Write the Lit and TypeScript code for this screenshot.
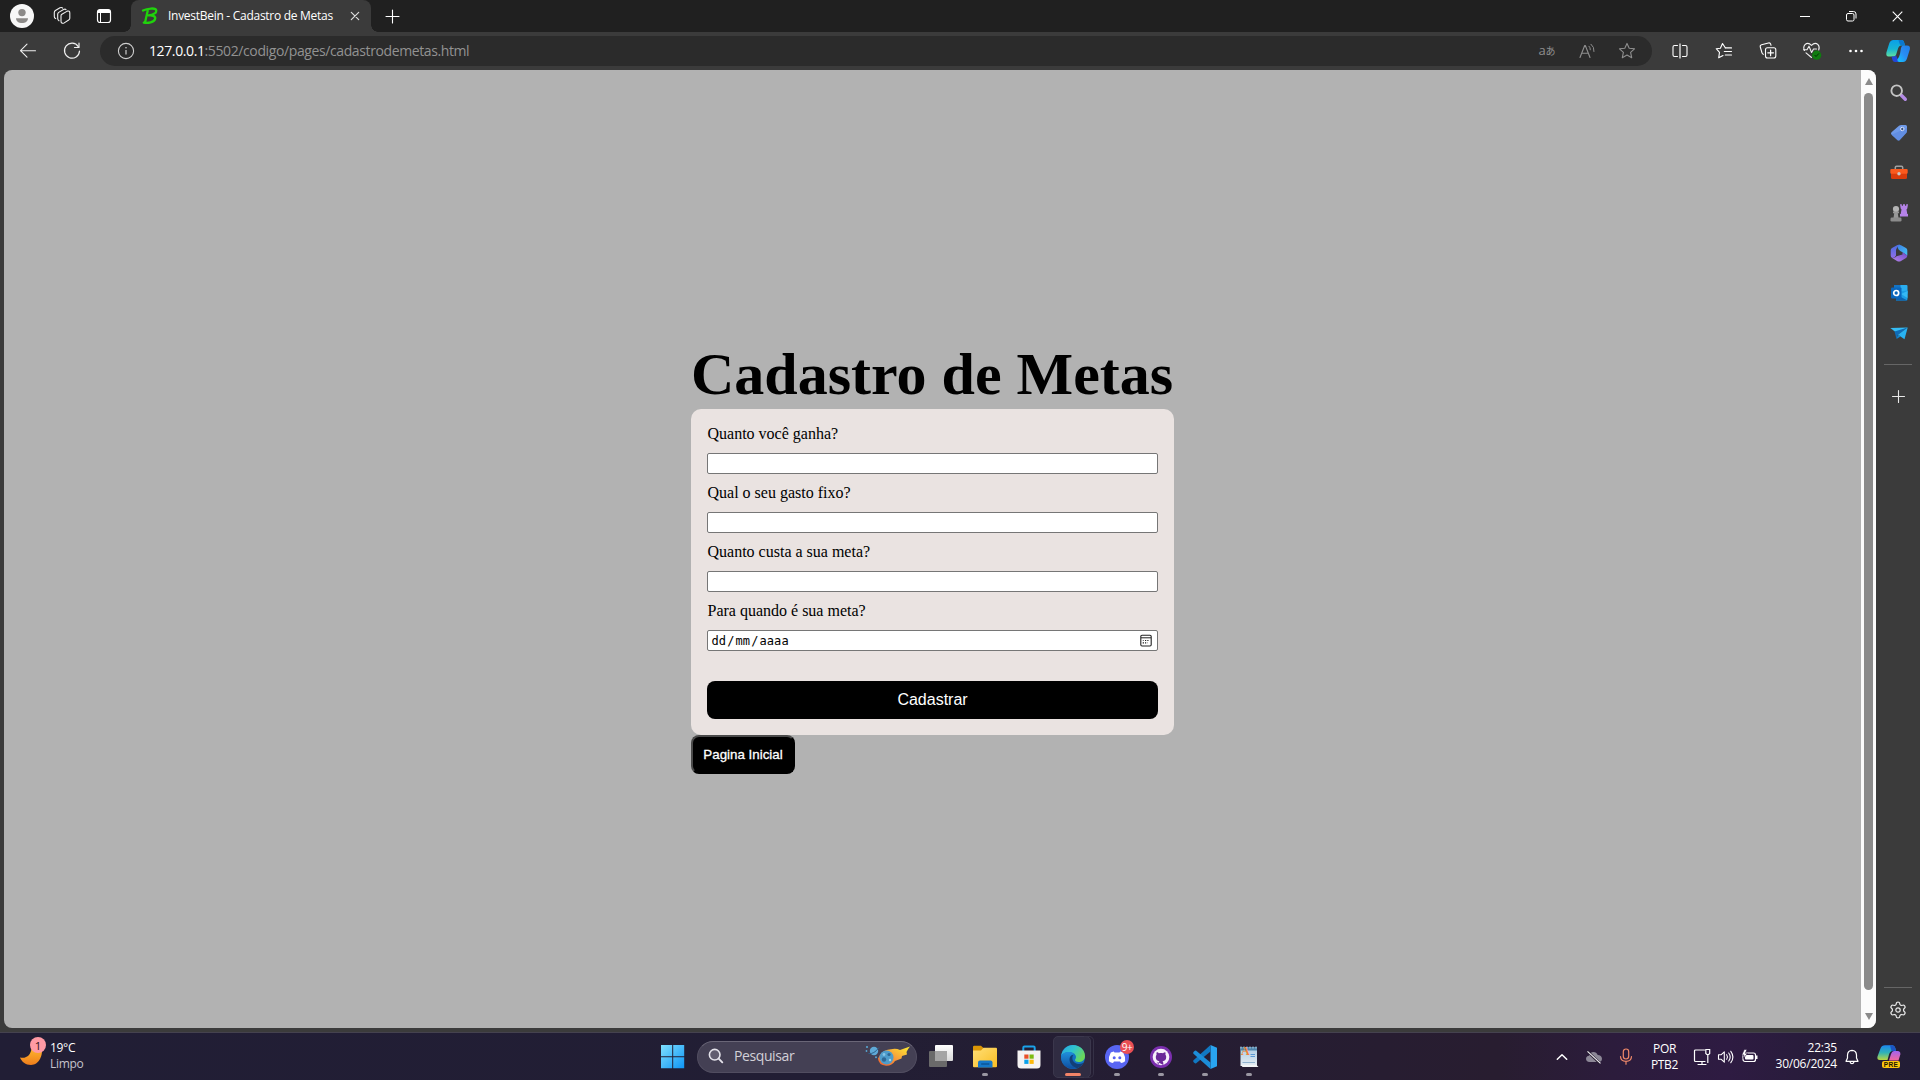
import { LitElement, html, css, svg, type TemplateResult } from "lit";
import { customElement } from "lit/decorators.js";

/** Wraps svg content in a square or rectangular icon of the given size. */
const icon = (w: number, h: number, body: TemplateResult, cls = "") =>
  html`<svg class="ico ${cls}" width=${w} height=${h} viewBox="0 0 ${w} ${h}" fill="none">${body}</svg>`;

const line = (d: string, stroke = "#fff", width = 1) =>
  svg`<path d=${d} stroke=${stroke} stroke-width=${width} stroke-linecap="round" stroke-linejoin="round"/>`;

/* ---- window chrome ---- */
const avatar = icon(24, 24, svg`<circle cx="12" cy="12" r="12" fill="#f7f7f7"/><circle cx="12" cy="8.6" r="3.7" fill="#8c8a88"/>
  <path d="M6 14.200h12c0 3.200-2.800 4.800-6 4.800s-6-1.600-6-4.800z" fill="#8c8a88"/>`);
const workspaces = icon(18, 18, svg`${line("M8.500 7.500 14.300 4.100Q16.800 3.500 16.800 6V11.200Q16.800 12.400 15.700 13L11.200 15.900Q8 17 8 14.200V9Q8 7.900 8.500 7.500Z", "#f0f0f0", 1.1)}
  ${line("M6 13.800Q4.700 13 4.700 11.600V7.300Q4.700 6.100 5.700 5.400L10.600 2.500Q12.200 1.700 13 2.700", "#f0f0f0", 1.1)}
  ${line("M2.700 11.600Q1.300 11 1.300 9.400V5.500Q1.300 4.200 2.400 3.500L7 .8Q8.800 0 9.700 1.100", "#f0f0f0", 1.1)}`);
const tabActions = icon(16, 16, svg`<rect x="1.500" y="1.500" width="13" height="13" rx="2.500" stroke="#fff" stroke-width="1.200"/>
  <path d="M1.500 5V4a2.500 2.500 0 0 1 2.500-2.500h8A2.500 2.500 0 0 1 14.500 4v1z" fill="#fff"/>${line("M4.500 5V14")}`);
const favicon = icon(16, 18, svg`<path d="M1 3.500 C5 1.500 14 .2 14.300 3.600 C14.500 6.500 9 8 6.500 8.400 C10 8 13.800 8.800 13.200 11.800 C12.500 15.500 5.500 16.500 1.800 15.600 M5.800 3.200 C5 7 4 11 3.200 15" stroke="#20d30c" stroke-width="2.300" stroke-linecap="round" stroke-linejoin="round"/>`);
const tabClose = icon(10, 10, line("M1.300 1.300 8.700 8.700 M8.700 1.300 1.300 8.700", "#ddd", 1.2));
const newTab = icon(15, 15, line("M7.500 1V14 M1 7.500H14", "#fff", 1.1));
const minimize = icon(10, 11, svg`<path d="M0 5.500H10" stroke="#fff"/>`);
const restore = icon(11, 11, svg`<rect x=".5" y="2.500" width="7.500" height="7.500" rx="1.500" stroke="#fff"/><path d="M3 .5H7.500Q10 .5 10 3V7.500" stroke="#fff"/>`);
const closeWin = icon(11, 11, svg`<path d="M.7 .7 10.300 10.300 M10.300 .7 .7 10.300" stroke="#fff" stroke-width="1.100"/>`);

/* ---- toolbar ---- */
const back = icon(18, 16, line("M1.500 7.700H16.500 M8 1.200 1.500 7.700 8 14.200", "#f0f0f0", 1.1));
const reload = icon(18, 18, svg`${line("M15.300 4.600A7.500 7.500 0 1 0 16.500 9", "#f0f0f0", 1.2)}${line("M16 1.200V5.500H11.500", "#f0f0f0", 1.2)}`);
const info = icon(18, 18, svg`<circle cx="9" cy="9" r="7.600" stroke="#cfcfcf" stroke-width="1.100"/><path d="M9 8V12.600" stroke="#cfcfcf" stroke-width="1.200"/><circle cx="9" cy="5.700" r=".8" fill="#cfcfcf"/>`);
const readAloud = icon(16, 16, svg`${line("M1 14.500 5.700 2.500H6.300L11 14.500 M2.700 10.300H9.300", "#8f8f8f", 1.1)}${line("M10 3.200Q11.500 4.500 11.300 6.800 M12 1.200Q15.500 4 15 8.500", "#8f8f8f", 1)}`);
const starPath = "M9 1.400 11.200 6.200 16.500 6.800 12.600 10.400 13.700 15.700 9 13 4.300 15.700 5.400 10.400 1.500 6.800 6.800 6.200Z";
const star = icon(18, 18, line(starPath, "#8f8f8f", 1.1));
const split = icon(16, 16, svg`${line("M5.500 2.500H2.500Q1 2.500 1 4V12Q1 13.500 2.500 13.500H5.500 M10.500 2.500H13.500Q15 2.500 15 4V12Q15 13.500 13.500 13.500H10.500", "#fff", 1.1)}<path d="M8 .5V15.500" stroke="#fff" stroke-width="1.200"/>`);
const favorites = icon(18, 18, svg`${line("M10.300 5.700 7.500 1.500 5.400 6.200 1.200 6.700 4.500 10.300 3.700 15.800 8 13.500", "#fff", 1.1)}${line("M10.300 5.900H16.500 M9.300 9.500H16.500 M10.300 13H16.500", "#fff", 1.1)}`);
const collections = icon(18, 18, svg`<rect x="6.500" y="5.700" width="10.300" height="10.300" rx="2" stroke="#fff" stroke-width="1.100"/>
  ${line("M11.600 8V13.700 M8.800 10.800H14.500", "#fff", 1.2)}${line("M4.500 12.300Q3.400 12.200 3 10.800L1.300 5Q.8 3.300 2.600 2.800L9.400 1Q11.200 .5 11.700 2.200L12 3.300", "#fff", 1.1)}`);
const health = icon(20, 20, svg`${line("M2.500 9.500Q.8 6.200 3 3.700 6 .9 9.500 4.300 13 .9 16 3.700 18 6 16.700 9 M4 11.800 9.500 16.500", "#f0f0f0", 1.1)}
  ${line("M1.500 8.700H5L7 5.200 9.600 11.500 11.500 8H14.500", "#f0f0f0", 1.1)}<circle cx="14.700" cy="14.200" r="4.600" fill="#107c10"/>${line("M12.900 14.300 14 15.500 16.700 12.700", "#062f06", 1)}`);
const dots = icon(16, 4, svg`<circle cx="2.500" cy="2" r="1.300" fill="#fff"/><circle cx="8" cy="2" r="1.300" fill="#fff"/><circle cx="13.500" cy="2" r="1.300" fill="#fff"/>`);

const copilot = icon(24, 24, svg`<defs>
    <linearGradient id="cpA" x1="0" y1="0" x2="0" y2="1"><stop offset="0" stop-color="#0a9fe8"/><stop offset=".55" stop-color="#17b4d2"/><stop offset="1" stop-color="#5fe0a0"/></linearGradient>
    <linearGradient id="cpB" x1="1" y1="0" x2="0" y2="1"><stop offset="0" stop-color="#1f7fe8"/><stop offset=".5" stop-color="#2a8cf4"/><stop offset="1" stop-color="#10c8ff"/></linearGradient></defs>
  <path d="M7.500 1H15.500Q17.700 1 18.300 4L19 6.500H15Q13 6.500 12.200 9L10 16Q9.500 17.500 7.500 17.500H2.500Q-.3 17.500 .4 13.500L3.200 4.500Q4.300 1 7.500 1Z" fill="url(#cpA)"/>
  <path d="M12.500 1H15.500Q17.700 1 18.300 4L19 6.500H15.500Q13.500 6 12.500 1Z" fill="#0a78d0"/>
  <path d="M5.500 17.500H7.500Q9.500 17.500 10 16L12 21Q12.500 23 14 23H9Q6.700 23 6.200 20Z" fill="#2346d8"/>
  <path d="M17 6.500H21Q24.700 6.700 23.800 10.500L21 19.500Q19.800 23 17 23H13Q11.300 22.700 11.300 20.500 13 19 14 15L15 9Q15.500 6.700 17 6.500Z" fill="url(#cpB)"/>`);

/* ---- sidebar ---- */
const sbSearch = icon(18, 18, svg`<path d="M11.300 11.300 15.300 15.300" stroke="#b48be6" stroke-width="3.400" stroke-linecap="round"/><circle cx="6.700" cy="6.700" r="5.300" stroke="#c4c4c4" stroke-width="1.900"/>`);
const sbTag = icon(18, 18, svg`<path d="M9 1.800Q10 1 11.300 1H15.500Q17 1 17 2.500V7Q17 8.300 16 9.300L9.800 16Q8.600 17.200 7.300 16L1.600 10.700Q.3 9.500 1.500 8.300Z" fill="#6f9ae8"/>
  <path d="M1.600 10.700 17 4V7Q17 8.300 16 9.300L9.800 16Q8.600 17.200 7.300 16Z" fill="#5582dc" opacity=".5"/><circle cx="12.300" cy="5" r="1.700" fill="#35507f" stroke="#dce6ff"/>`);
const sbTools = icon(18, 16, svg`<path d="M5.300 4V2.500Q5.300 1.300 6.500 1.300H11.500Q12.700 1.300 12.700 2.500V4" stroke="#a0a0a0" stroke-width="1.500"/>
  <path d="M1 8H17V12.500Q17 14 15.500 14H2.500Q1 14 1 12.500Z" fill="#d93c0c"/><rect x=".3" y="4" width="17.400" height="4.800" rx="1" fill="#fa5a1e"/><circle cx="9" cy="8.700" r="1.700" fill="#c8c8c8"/>`);
const sbGames = icon(18, 18, svg`<path d="M10 .3H11.800V1.800H13V.3H15V1.800H16.200V.3H18L17.300 4.500 16.500 5.500 17.300 10H18V12.500H10V10H10.700L11.500 5.500 10.700 4.500Z" fill="#b583e8"/>
  <circle cx="6" cy="5" r="3.100" fill="#b4b4b4"/><path d="M3 7.500H9V9.300H7.800L8.500 14H3.500L4.200 9.300H3Z" fill="#989898"/><rect x=".5" y="13.600" width="11" height="4" rx="1.300" fill="#8c8c8c"/>`);
const sb365 = icon(18, 18, svg`<defs><linearGradient id="mA" x1="0" y1="0" x2="0" y2="1"><stop stop-color="#4a6ce0"/><stop offset="1" stop-color="#8f6ee8"/></linearGradient>
    <linearGradient id="mB" x1="0" y1="1" x2="1" y2="0"><stop stop-color="#b884ea"/><stop offset="1" stop-color="#6a4cc8"/></linearGradient>
    <linearGradient id="mC" x1="0" y1="0" x2="1" y2="1"><stop stop-color="#3c7ce4"/><stop offset="1" stop-color="#45c6f6"/></linearGradient></defs>
  <path d="M7 1.200Q9 .2 11 1.200L16 4Q17.300 4.800 17.300 6.300V11.500L12.500 8.200Q7.500 6 7 1.200Z" fill="url(#mC)"/>
  <path d="M7 1.200 10 .6Q6.500 3 6 6V11.500Q5 14 2.200 14 .7 13.300 .7 11.500V6.200Q.7 5 2 4Z" fill="url(#mA)"/>
  <path d="M2.200 14Q5 14.500 6.500 12.300L12.500 10.500V8.200L17.300 11.500Q17.300 13 16 14L11 17Q9 18 7 17Z" fill="url(#mB)"/>`);
const sbOutlook = icon(18, 18, svg`<rect x="4" y="1" width="13.500" height="9" rx="1" fill="#2aaef0"/><path d="M4 1H10.500V6H4Z" fill="#1373c4"/><path d="M6 8 17.500 6.500V15Q17.500 16.500 16 16.500H6Z" fill="#1b9de6"/><path d="M6 10.500 17.500 16.500H6Z" fill="#0d62b0"/><path d="M11 10 17.500 7V14Z" fill="#35b9f5"/>
  <rect x="1" y="3.500" width="10.500" height="11" rx="1" fill="#0a66bd"/><circle cx="6.200" cy="9" r="2.500" stroke="#fff" stroke-width="1.700"/>`);
const sbDrop = icon(18, 14, svg`<path d="M.3 2 17.700 1.500 6.500 6.800Z" fill="#35bdf5"/><path d="M4.500 5.500 17.700 1.500 7.700 9 6.500 13Z" fill="#0f6cb8"/><path d="M8 8.800 17.700 1.500 14.500 13.200Z" fill="#28b2f2"/><path d="M6.500 13 8 8.800 10.500 10.500Z" fill="#1586d0"/>`);
const gear = (() => {
  // Six rounded teeth laid out around the centre.
  let d = "";
  for (let i = 0; i < 72; i++) {
    const a = (i / 72) * Math.PI * 2;
    const r = 6.7 + 1.15 * Math.tanh(2 * Math.cos(6 * (a - Math.PI / 2)));
    d += `${i ? "L" : "M"}${(9 + r * Math.cos(a)).toFixed(2)} ${(9 + r * Math.sin(a)).toFixed(2)}`;
  }
  return icon(18, 18, svg`${line(d + "Z", "#e8e8e8", 1.2)}<circle cx="9" cy="9" r="2.200" stroke="#e8e8e8" stroke-width="1.200"/>`);
})();

/* ---- page ---- */
const calendar = icon(12, 13, svg`<rect x=".8" y="1.200" width="10.400" height="10.800" rx="1.200" stroke="#222" stroke-width="1.100"/><path d="M1 3.800H11" stroke="#222"/>
  <path d="M5 6.500H6.200M7.300 6.500H8.500M2.700 8.800H4M5 8.800H6.200" stroke="#222" stroke-width="1.200"/><path d="M2.700 6.500H4M7.300 8.800H8" stroke="#777"/>`);

/* ---- taskbar ---- */
const moon = icon(24, 22, svg`<defs><linearGradient id="mo" x1="0" y1="0" x2="0" y2="1"><stop stop-color="#ffb92e"/><stop offset="1" stop-color="#ee7d1c"/></linearGradient></defs>
  <path d="M0 11.500C6.500 13 11 9 11.500 2L21.500 1.500C23.500 8 19.500 19 11 19 5.500 19 1.500 15.500 0 11.500Z" fill="url(#mo)"/>`);
const start = icon(24, 24, svg`<defs><linearGradient id="st" x1="0" y1="0" x2="24" y2="24" gradientUnits="userSpaceOnUse"><stop stop-color="#7fe0ff"/><stop offset="1" stop-color="#0a92f5"/></linearGradient></defs>
  <path d="M0 0H11.200V11.200H0ZM12.200 0H23.200V11.200H12.200ZM0 12.200H11.200V23.200H0ZM12.200 12.200H23.200V23.200H12.200Z" fill="url(#st)"/>`);
const lens = icon(16, 16, svg`<circle cx="6.700" cy="6.700" r="5.300" stroke="#e4e2ea" stroke-width="1.600" fill="#625d70"/><path d="M10.700 10.700 14.300 14.300" stroke="#e4e2ea" stroke-width="1.900" stroke-linecap="round"/>`);
const comet = icon(46, 22, svg`<defs><linearGradient id="co" x1="0" y1="1" x2="1" y2="0"><stop stop-color="#ef5a2c"/><stop offset=".5" stop-color="#f8a13c"/><stop offset="1" stop-color="#fff02e"/></linearGradient></defs>
  <circle cx="9" cy="6" r="4.200" fill="#5fa9d6"/><path d="M3.500 8.500Q9 9.500 14 2.500" stroke="#2c618c" stroke-width="1"/><circle cx="2" cy="2" r="1.100" fill="#58a5d0"/><circle cx="1.500" cy="6" r=".9" fill="#58a5d0"/><circle cx="11" cy="12.200" r="1" fill="#58a5d0"/>
  <path d="M15 10Q19 4.500 26 4.200 31 3 35 5L45 1.500Q42.500 4.500 41.500 7L42 9.500 37 11 36.500 13.500 30 16Q27 21 21 20.800 13.500 20 13 13.500Z" fill="url(#co)"/>
  <circle cx="21.500" cy="12.500" r="7" fill="#4e9ccb"/><circle cx="19" cy="14.500" r="2.200" fill="#2d6896"/><circle cx="24" cy="9.500" r="1.600" fill="#2d6896"/><circle cx="25" cy="15" r="1.200" fill="#9fd4ef"/><circle cx="19" cy="9.500" r="1.400" fill="#86c4e6"/>`);
const taskView = icon(24, 24, svg`<defs><linearGradient id="tv" x1="0" y1="0" x2="0" y2="1"><stop stop-color="#fff"/><stop offset="1" stop-color="#d8d8d8"/></linearGradient></defs><rect x="6" y="0" width="18" height="16" rx="1" fill="url(#tv)"/><rect x="0" y="6" width="18" height="16" rx="1" fill="#6a6a6a"/><path d="M6 6H18V16H6Z" fill="#a4a4a4"/>`);
const explorer = icon(24, 24, svg`<defs><linearGradient id="fo" x1="0" y1="0" x2="1" y2="1"><stop stop-color="#ffdf77"/><stop offset="1" stop-color="#f8bd22"/></linearGradient></defs>
  <path d="M0 2Q0 .8 1.200 .8H8L10.500 3V6H0Z" fill="#dc9606"/><path d="M0 5.500H8L10.500 2.800H23Q24 2.800 24 4V21.300Q24 22.300 23 22.300H1Q0 22.300 0 21.300Z" fill="url(#fo)"/>
  <path d="M5 22.500V17.500Q5 15.500 7 15.500H17.500Q19.500 15.500 19.500 17.500V22.500Z" fill="#1578c8"/><rect x="8" y="18.300" width="8.500" height="1.500" rx=".7" fill="#0c5596"/>`);
const store = icon(24, 24, svg`<path d="M6.300 6V2.700Q6.300 1.500 7.500 1.500H16.500Q17.700 1.500 17.700 2.700V6" stroke="#1aa2ea" stroke-width="2"/><path d="M.5 5.500H23.500V20Q23.500 23.500 20 23.500H4Q.5 23.500 .5 20Z" fill="#f4f2f2"/>
  <path d="M7.300 9.500H11.500V13.700H7.300Z" fill="#e8502a"/><path d="M12.500 9.500H16.700V13.700H12.500Z" fill="#7cbb10"/><path d="M7.300 14.700H11.500V18.900H7.300Z" fill="#0ba1ea"/><path d="M12.500 14.700H16.700V18.900H12.500Z" fill="#fdb90b"/>`);
const edge = icon(24, 24, svg`<defs><linearGradient id="eA" x1="0" y1="0" x2="1" y2=".5"><stop stop-color="#2aa6e0"/><stop offset=".5" stop-color="#2fc3d0"/><stop offset="1" stop-color="#6ad85a"/></linearGradient><linearGradient id="eB" x1="0" y1="0" x2="0" y2="1"><stop stop-color="#2090dc"/><stop offset="1" stop-color="#0f4fa0"/></linearGradient></defs>
  <circle cx="12" cy="12" r="12" fill="#1272c4"/><path d="M.2 11C1 4.500 6 0 12 0 19 0 24 5 24 11 24 15 21 17 17.500 17 15.500 17 14 16 14 15 14.300 14 15 13.500 15 12 15 9.500 12 7 8 7 4.500 7 1.500 8.500 .2 11Z" fill="url(#eA)"/>
  <path d="M.2 11C1.500 8.500 4.500 7 8 7 10.500 7 12.500 8 13.700 9.300 10.500 9 8.500 12 8.500 14.500 8.500 19 12.500 22.500 16 23.300 7 25.500 -.8 19.500 .2 11Z" fill="url(#eB)"/><path d="M8.500 14.500C8.500 12 10 10 12.300 9.700 11 11.500 11 14.500 12.500 16.500 14.500 19.300 18.500 19.700 22.500 17.800 21 20.500 18.500 22.500 16 23.300 12 22 8.500 19 8.500 14.500Z" fill="#123f78"/>`);
const discord = icon(24, 24, svg`<circle cx="12" cy="12" r="12" fill="#5865f2"/><path d="M8.800 6.500Q7 6.800 5.800 7.600 3.500 11.500 3.900 16.200 5.800 17.700 8 18L9 16.500H15L16 18Q18.200 17.700 20.100 16.200 20.500 11.500 18.200 7.600 17 6.800 15.200 6.500L14.500 7.500H9.500Z" fill="#fff"/><circle cx="9.200" cy="12.700" r="1.500" fill="#5865f2"/><circle cx="14.800" cy="12.700" r="1.500" fill="#5865f2"/>`);
const github = icon(22, 22, svg`<circle cx="11" cy="11" r="11" fill="#7b2fae"/><circle cx="11" cy="11" r="8.300" fill="#f6f0fa"/>
  <path d="M8.700 19V16.500C7.200 16.800 6.500 16 6 15 M8.700 16.500C9 15.700 9.200 15.500 9.500 15.300 7 15 5.800 13.500 5.800 11 5.800 10 6.100 9.300 6.600 8.700 6.300 7.800 6.400 7 6.700 6.300 7.700 6.300 8.500 6.900 9 7.300 10.200 7 11.800 7 13 7.300 13.600 6.800 14.400 6.300 15.300 6.300 15.600 7 15.700 7.900 15.400 8.700 16 9.300 16.200 10 16.200 11 16.200 13.500 15 15 12.500 15.300 13 15.700 13.300 16.300 13.300 17V19Z" fill="#6a2898"/>`);
const vscode = icon(24, 24, svg`<path d="M17.500 0 24 2.800V21.200L17.500 24Z" fill="#29a4f0"/><path d="M17.500 0V6.500L3.200 18.200Q2.300 18.700 1.500 18L.5 17Q-.3 16 .5 15.200Z" fill="#1178c2"/><path d="M17.500 24V17.500L3.200 5.800Q2.300 5.300 1.500 6L.5 7Q-.3 8 .5 8.800Z" fill="#1c8dd8"/>`);
const wordpad = icon(20, 24, svg`<defs><linearGradient id="wp" x1="0" y1="0" x2="0" y2="1"><stop stop-color="#a9cbe4"/><stop offset="1" stop-color="#e6edf2"/></linearGradient></defs>
  <path d="M1.500 2H18V21H1.500Z" fill="url(#wp)"/><path d="M1.500 2H18V5.500H1.500Z" fill="#4f86ad"/><path d="M2 1.500V3.500M5 1.500V3.500M8 1.500V3.500M11 1.500V3.500M14 1.500V3.500M17 1.500V3.500" stroke="#b8d3e2"/>
  <path d="M11.500 9.500H16M11.500 11.500H16" stroke="#5c9ad4"/><path d="M3.500 17.500H16" stroke="#8fb2cf"/><path d="M2 20H17.500L19.500 22H3.500Z" fill="#f3f5f6"/>`);
const chevron = icon(12, 8, line("M1.300 6.300 6 1.700 10.700 6.300", "#fff", 1.5));
const cloud = icon(18, 14, svg`<path d="M4.500 12Q1 11.700 1 8.800 1.200 6 4 5.700 5 2 8.500 2 11.500 2 12.700 5 16.500 5 17 8.700 16.800 12 13.500 12Z" fill="#8c8796"/><path d="M2.500 1.300 14.500 13" stroke="#271d30" stroke-width="2.500"/><path d="M2.500 1.300 15.500 13.300" stroke="#f4f2f6" stroke-width="1.100"/>`);
const mic = icon(14, 18, svg`<rect x="4.300" y="1" width="5.400" height="10" rx="2.700" stroke="#f0896a" stroke-width="1.200"/>${line("M1.500 8.500Q1.700 13.300 7 13.300 12.300 13.300 12.500 8.500 M7 13.500V16.200", "#f0896a", 1.2)}`);
const network = icon(18, 18, svg`${line("M11.500 2H2.500Q1.500 2 1.500 3V12.500Q1.500 13.500 2.500 13.500H12 M5 16.500H13 M9 13.700V16.300", "#fff", 1.2)}<path d="M12.800 1.500H16.700V5.500L15.700 6.500H13.800L12.800 5.500ZM14.800 6.500V15" stroke="#fff" stroke-width="1.200"/>`);
const sound = icon(18, 16, svg`${line("M1.500 5.800H4L7.300 2.800V13.200L4 10.200H1.500Z M9.700 5.700Q11.300 8 9.700 10.300 M11.700 4Q14.700 8 11.700 12 M13.800 2.300Q18 8 13.800 13.700", "#fff", 1.1)}`);
const battery = icon(18, 15, svg`<rect x="2" y="4" width="12.500" height="8.500" rx="2" stroke="#fff" stroke-width="1.200"/><rect x="4" y="6" width="8.500" height="4.500" rx="1" fill="#fff"/><path d="M15.700 6.500V10" stroke="#fff" stroke-width="1.600"/><path d="M3.300 .5 .8 6H3L2.300 9.500 6.500 4.300H4.300L6 .5Z" fill="#fff" stroke="#2d1b40" stroke-width=".6"/>`);
const bell = icon(14, 16, svg`${line("M7 1.300Q2.700 1.500 2.500 6V9L1 12.300H13L11.500 9V6Q11.300 1.500 7 1.300Z M5 12.800Q5.500 14.700 7 14.700 8.500 14.700 9 12.800", "#fff", 1.2)}`);
const copilotTask = icon(24, 18, svg`<defs><linearGradient id="ctA" x1="0" y1="0" x2="0" y2="1"><stop stop-color="#1c86ee"/><stop offset=".5" stop-color="#2fb2b8"/><stop offset="1" stop-color="#b9d640"/></linearGradient><linearGradient id="ctB" x1="0" y1="0" x2="0" y2="1"><stop stop-color="#a164f0"/><stop offset="1" stop-color="#f5689a"/></linearGradient></defs>
  <path d="M8 .3H15.500Q17.500 .3 18.300 3L19 6H15.500Q13 6 12 9.500L10.500 15H3Q-.3 15 .5 11.500L3.500 3.500Q4.700 .3 8 .3Z" fill="url(#ctA)"/><path d="M13 .3H15.500Q17.500 .3 18.300 3L19 6H14.500Z" fill="#1c55c4"/><path d="M17 6H20.500Q23.800 6.200 23.300 9.500L21.500 15.500H12L14 9Q15 6.200 17 6Z" fill="url(#ctB)"/>`);

const FIELDS = ["Quanto você ganha?", "Qual o seu gasto fixo?", "Quanto custa a sua meta?"];

@customElement("app-root")
export class AppRoot extends LitElement {
  static styles = css`
    :host { display: block; width: 1920px; height: 1080px; overflow: hidden; background: #3b3b3b; font-family: "Open Sans", "Noto Sans", sans-serif; }
    * { box-sizing: border-box; }
    .ico { display: block; flex: none; overflow: visible; }
    .screen { display: flex; flex-direction: column; height: 1080px; }
    .cell { display: flex; align-items: center; justify-content: center; flex: none; }
    .grow { flex: 1; }

    .tabs { display: flex; height: 32px; background: #202020; color: #fff; }
    .c44 { width: 44px; } .c46 { width: 46px; } .c40 { width: 40px; } .c42 { width: 42px; }
    .lead { width: 40px; margin-left: 2px; }
    .tab { display: flex; align-items: center; width: 240px; height: 32px; margin-left: 5px; padding: 0 11px 0 11px; border-radius: 8px 8px 0 0; background: #3b3b3b; position: relative; }
    .tab::before, .tab::after { content: ""; position: absolute; bottom: 0; width: 7px; height: 7px; }
    .tab::before { left: -7px; background: radial-gradient(circle at 0 0, transparent 6.500px, #3b3b3b 7px); }
    .tab::after { right: -7px; background: radial-gradient(circle at 100% 0, transparent 6.500px, #3b3b3b 7px); }
    .tabtitle { margin-left: 10px; flex: 1; font-size: 12px; letter-spacing: -0.28px; white-space: nowrap; padding-bottom: 1px; }

    .toolbar { display: flex; align-items: center; height: 38px; padding-left: 6px; background: #3b3b3b; flex: none; }
    .address { display: flex; align-items: center; width: 1552px; height: 30px; margin: 0 6px; border-radius: 15px; background: #2b2b2b; padding-right: 5px; }
    .info { width: 49px; padding-left: 3px; }
    .url { font-size: 14px; color: #929292; letter-spacing: -0.39px; white-space: nowrap; padding-bottom: 1px; }
    .url b { font-weight: 400; color: #fff; }
    .translate { font-size: 13px; color: #8f8f8f; font-family: "Open Sans", "Noto Sans CJK JP", sans-serif; padding-bottom: 2px; }
    .translate small { font-size: 10px; }
    .last { width: 40px; }

    .body { display: flex; height: 962px; padding-left: 4px; }
    .viewport { display: flex; width: 1872px; height: 958px; border-radius: 8px; overflow: hidden; background: #b2b2b2; }
    .page { width: 1857px; display: flex; flex-direction: column; align-items: center; padding-top: 271px; font-family: "Liberation Serif", serif; color: #000; }
    .content { width: 483px; }
    h1 { margin: 0; font-size: 60px; line-height: 66px; height: 68px; font-weight: 700; white-space: nowrap; }
    .form { display: flex; flex-direction: column; gap: 10px; height: 326px; padding: 16px; border-radius: 10px; background: #eae3e1; }
    .form label { font-size: 16px; line-height: 18px; height: 18px; padding-left: 0.5px; }
    .field { width: 451px; height: 21px; margin: 0; border: 1px solid #767676; border-radius: 2px; background: #fff; padding: 0 5px 0 4px; display: flex; align-items: center; justify-content: space-between; }
    .date { font-family: "DejaVu Sans Mono", monospace; font-size: 12px; letter-spacing: 0.1px; line-height: 18px; margin-left: -0.5px; }
    .date i { font-style: normal; padding: 0 1px; }
    .submit { height: 38px; margin-top: 20px; border: 0; border-radius: 8px; background: #000; color: #fff; font: 16px "Liberation Sans", Arial, sans-serif; }
    .home { display: block; width: 104px; height: 39px; border: 2px solid; border-color: #4a4a4a #000 #000 #4a4a4a; border-radius: 8px; padding: 0; background: #000; color: #fff; font: 13.333px "Liberation Sans", Arial, sans-serif; -webkit-text-stroke: 0.3px #fff; }
    .scroll { width: 15px; background: #fcfcfc; display: flex; flex-direction: column; align-items: center; padding: 8px 0 8px; }
    .up, .down { width: 0; height: 0; border: 4.500px solid transparent; }
    .up { border-top: 0; border-bottom: 7px solid #8b8b8b; }
    .down { border-bottom: 0; border-top: 7px solid #8b8b8b; margin-top: 23px; }
    .thumb { width: 9px; height: 897px; margin-top: 8px; border-radius: 5px; background: #8b8b8b; }

    .side { display: flex; flex-direction: column; align-items: center; width: 44px; padding-top: 2px; }
    .side .cell { width: 44px; height: 40px; }
    .side .tool { padding: 1px 0 0 1px; }
    .side .rulebox { height: 25px; padding-bottom: 1px; }
    .rule { width: 28px; height: 1px; background: #666; flex: none; }
    .side .add { height: 38px; }
    .side .set { height: 44px; }

    .taskbar { display: flex; align-items: center; height: 48px; border-top: 1px solid #45424f; background: linear-gradient(90deg, #211e35 0, #221e34 45%, #251d33 60%, #281d30 78%, #2c1c3c 84%, #2e1b42 90%, #241d36 97%, #221d35 100%); color: #fff; font-size: 12px; }
    .weather { display: flex; width: 651px; height: 47px; padding: 5px 0 0 20px; }
    .moonbox { position: relative; width: 24px; padding-top: 8px; }
    .badge { position: absolute; display: flex; align-items: center; justify-content: center; border-radius: 50%; }
    .one { left: 10px; top: -1px; width: 16px; height: 16px; background: #ff9aa4; color: #2b1216; font-size: 11.500px; }
    .lines { line-height: 16px; white-space: nowrap; }
    .wtext { margin-left: 6px; padding-top: 2px; letter-spacing: -0.3px; }
    .wtext div + div { color: #c5c3cc; }
    .app { width: 44px; height: 47px; position: relative; }
    .dot { position: absolute; bottom: 4px; left: 19px; width: 6px; height: 3px; border-radius: 2px; background: #9a97a2; }
    .active::before { content: ""; position: absolute; left: 2px; top: 3px; width: 36px; height: 40px; border-radius: 5px; background: #302c42; border: 1px solid #3b374c; }
    .active::after { content: ""; position: absolute; left: 33px; top: 3px; width: 9px; height: 40px; border-radius: 0 5px 5px 0; border: 1px solid #353146; border-left: 0; }
    .active .ico { position: relative; }
    .active .dot { left: 14px; width: 16px; background: #f38468; z-index: 1; }
    .nine { left: 25px; top: 7px; width: 14px; height: 14px; background: #ea4f55; font-size: 10px; letter-spacing: -0.4px; }
    .letter { position: absolute; left: 14px; top: 11px; color: #f08236; font: 700 12px "Liberation Serif", serif; }
    .search { display: flex; align-items: center; width: 220px; height: 32px; margin: 0 2px; padding: 0 5px 1px 10px; border-radius: 16px; background: #444054; border: 1px solid #514d60; border-top-color: #6a6677; }
    .search span { margin-left: 10px; flex: 1; font-size: 14px; color: #d2d0d8; letter-spacing: -0.4px; padding-bottom: 1px; }
    .c32 { width: 32px; } .c24 { width: 24px; }
    .lang { width: 45px; text-align: center; letter-spacing: -0.3px; }
    .net { margin-left: 3px; }
    .clock { width: 75px; text-align: right; letter-spacing: -0.22px; padding-bottom: 1px; }
    .belly { margin-left: 3px; }
    .pre { position: relative; width: 49px; margin-right: 7px; height: 47px; padding-bottom: 6px; }
    .tag { left: 18px; top: 28px; width: 18px; height: 7px; border-radius: 2px; background: #fdc50f; color: #201800; font: 700 6.500px "Liberation Sans", sans-serif; letter-spacing: 0.3px; }
  `;

  private app(body: TemplateResult, extra: TemplateResult | string = "", cls = "") {
    return html`<div class="cell app ${cls}">${body}${extra}<span class="dot"></span></div>`;
  }

  private chrome() {
    return html`
      <div class="tabs">
        <div class="cell lead">${avatar}</div><div class="cell c40">${workspaces}</div><div class="cell c44">${tabActions}</div>
        <div class="tab">${favicon}<span class="tabtitle">InvestBein - Cadastro de Metas</span>${tabClose}</div>
        <div class="cell c42">${newTab}</div><div class="grow"></div>
        <div class="cell c46">${minimize}</div><div class="cell c46">${restore}</div><div class="cell c46">${closeWin}</div>
      </div>
      <div class="toolbar">
        <div class="cell c44">${back}</div><div class="cell c44">${reload}</div>
        <div class="address">
          <div class="cell info">${info}</div>
          <div class="url"><b>127.0.0.1</b>:5502/codigo/pages/cadastrodemetas.html</div><div class="grow"></div>
          <div class="cell c40 translate">a<small>あ</small></div><div class="cell c40">${readAloud}</div><div class="cell c40">${star}</div>
        </div>
        ${[split, favorites, collections, health, dots].map((i) => html`<div class="cell c44">${i}</div>`)}
        <div class="cell last">${copilot}</div>
      </div>`;
  }

  private page() {
    return html`
      <div class="page"><div class="content">
        <h1>Cadastro de Metas</h1>
        <div class="form">
          ${FIELDS.map((f) => html`<label>${f}</label><input class="field" />`)}
          <label>Para quando é sua meta?</label>
          <div class="field"><span class="date">dd<i>/</i>mm<i>/</i>aaaa</span>${calendar}</div>
          <button class="submit">Cadastrar</button>
        </div>
        <button class="home">Pagina Inicial</button>
      </div></div>`;
  }

  private taskbar() {
    return html`
      <div class="taskbar">
        <div class="weather">
          <div class="moonbox">${moon}<span class="badge one">1</span></div>
          <div class="lines wtext"><div>19°C</div><div>Limpo</div></div>
        </div>
        <div class="cell c44">${start}</div>
        <div class="search">${lens}<span>Pesquisar</span>${comet}</div>
        <div class="cell c44">${taskView}</div>
        ${this.app(explorer)}
        <div class="cell c44">${store}</div>
        ${this.app(edge, "", "active")}
        ${this.app(discord, html`<span class="badge nine">9+</span>`)}
        ${this.app(github)}${this.app(vscode)}
        ${this.app(wordpad, html`<span class="letter">A</span>`)}
        <div class="grow"></div>
        <div class="cell c32">${chevron}</div><div class="cell c32">${cloud}</div><div class="cell c32">${mic}</div>
        <div class="lines lang"><div>POR</div><div>PTB2</div></div>
        <div class="cell c24 net">${network}</div><div class="cell c24">${sound}</div><div class="cell c24">${battery}</div>
        <div class="lines clock"><div>22:35</div><div>30/06/2024</div></div>
        <div class="cell c24 belly">${bell}</div>
        <div class="cell pre">${copilotTask}<span class="badge tag">PRE</span></div>
      </div>`;
  }

  render() {
    return html`<div class="screen">
      ${this.chrome()}
      <div class="body">
        <div class="viewport">${this.page()}
          <div class="scroll"><div class="up"></div><div class="thumb"></div><div class="down"></div></div>
        </div>
        <div class="side">
          ${[sbSearch, sbTag, sbTools, sbGames, sb365, sbOutlook, sbDrop].map((i) => html`<div class="cell tool">${i}</div>`)}
          <div class="cell rulebox"><div class="rule"></div></div>
          <div class="cell add">${icon(13, 13, line("M6.500 .5V12.500M.5 6.500H12.500", "#e8e8e8", 1.1))}</div>
          <div class="grow"></div><div class="rule"></div><div class="cell set">${gear}</div>
        </div>
      </div>
      ${this.taskbar()}
    </div>`;
  }
}
